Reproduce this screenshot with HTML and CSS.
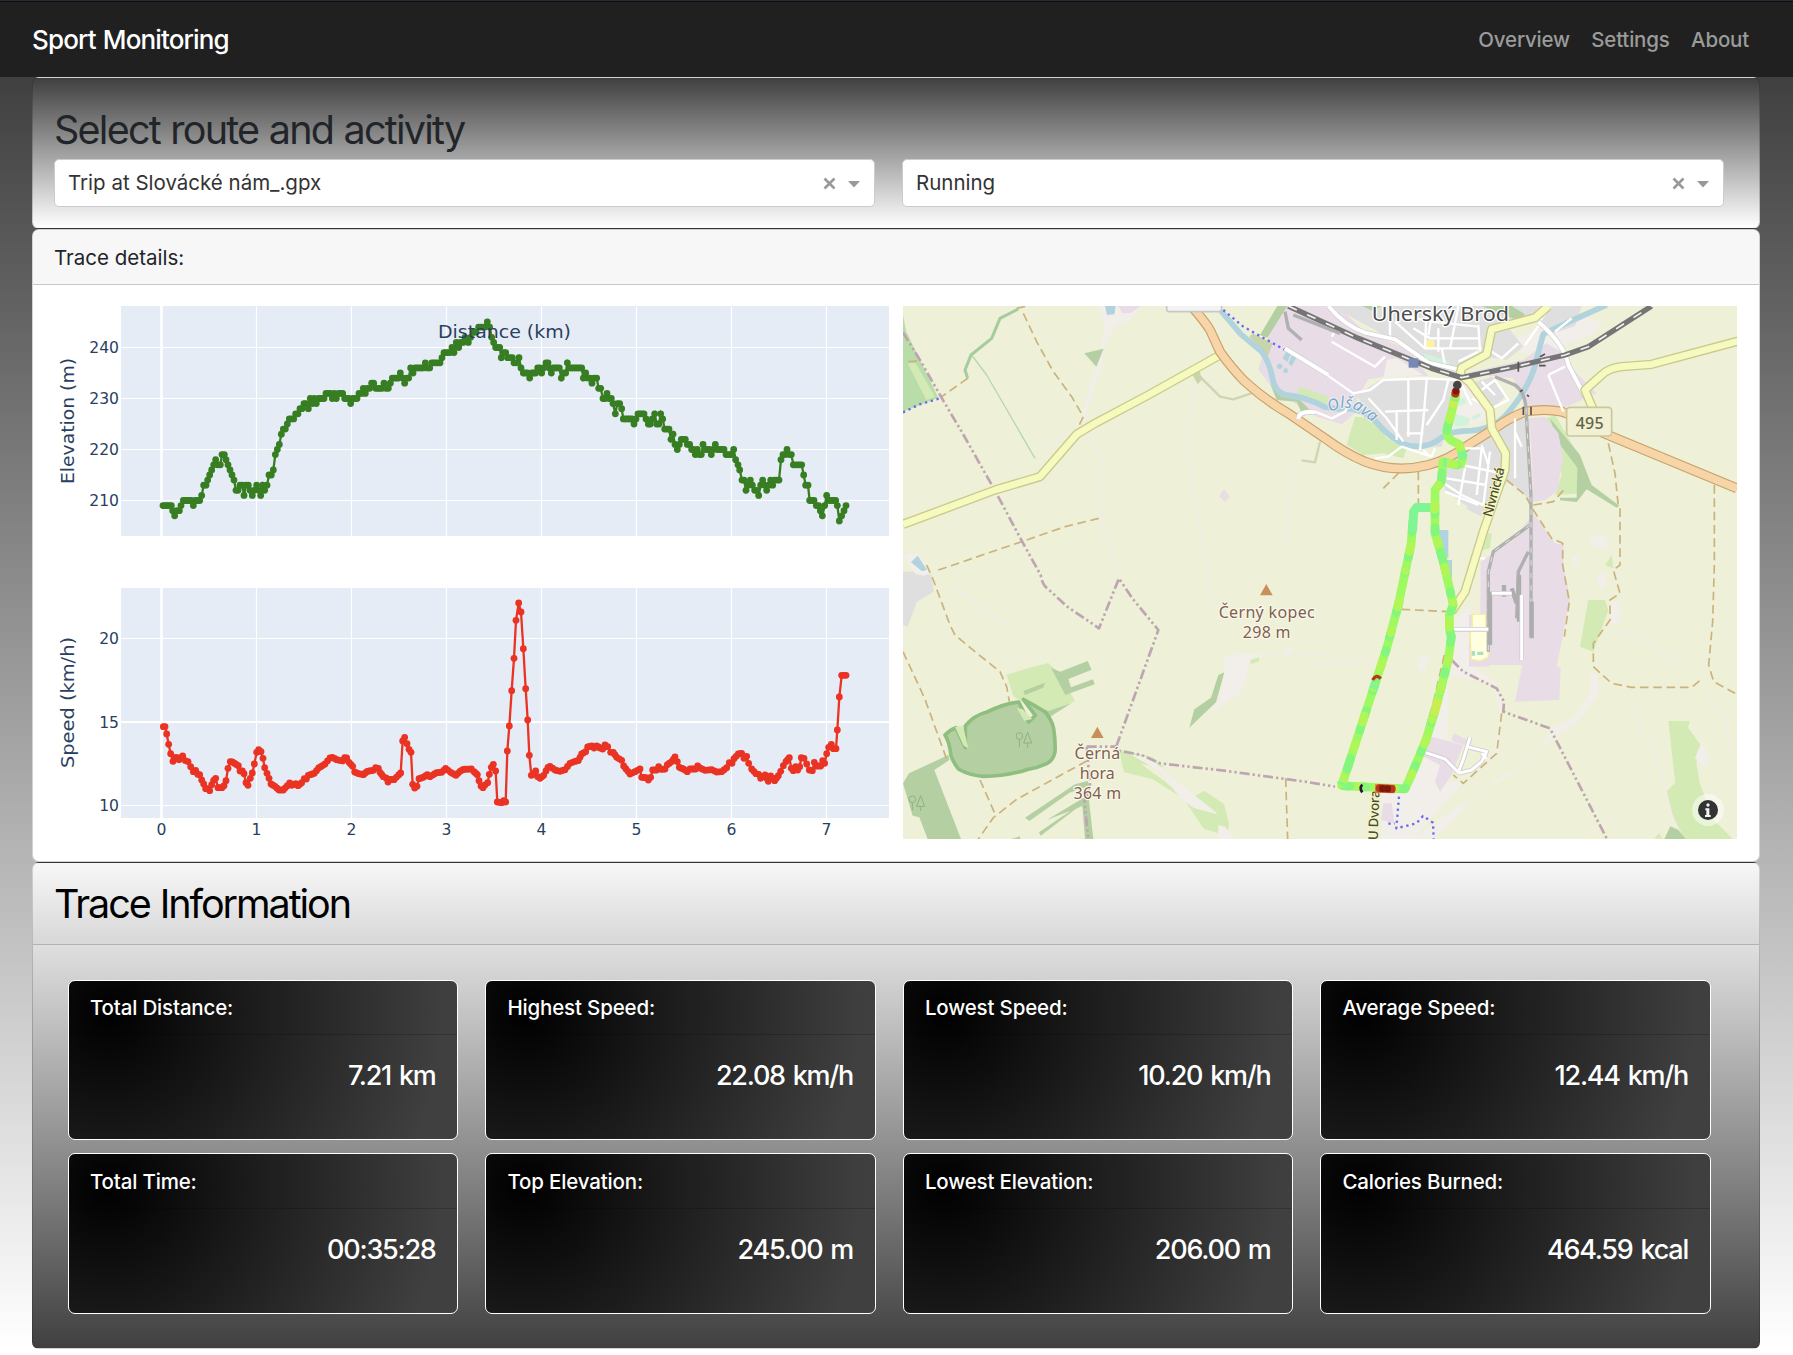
FILE: index.html
```html
<!DOCTYPE html>
<html lang="en">
<head>
<meta charset="utf-8">
<title>Sport Monitoring</title>
<link rel="stylesheet" href="styles.css">
</head>
<body>
<nav class="navbar">
  <a class="brand">Sport Monitoring</a>
  <div class="links"><a>Overview</a><a>Settings</a><a>About</a></div>
</nav>
<main class="page">
  <section class="card picker">
    <h2>Select route and activity</h2>
    <div class="pair">
      <div class="select"><span>Trip at Slovácké nám_.gpx</span><svg class="ctl" viewBox="0 0 40 20"><path d="M3.5 5.500l10 10M13.500 5.500L3.500 15.500"/><path class="fill" d="M27 8h12l-6 6.500z"/></svg></div>
      <div class="select"><span>Running</span><svg class="ctl" viewBox="0 0 40 20"><path d="M3.500 5.500l10 10M13.500 5.500L3.500 15.500"/><path class="fill" d="M27 8h12l-6 6.500z"/></svg></div>
    </div>
  </section>

  <section class="card details">
    <div class="card-head">Trace details:</div>
    <div class="card-body">
      <svg class="charts" viewBox="55 306 834 533">
        <rect class="plot" x="121" y="306" width="768" height="230"/>
        <rect class="plot" x="121" y="588" width="768" height="230"/>
        <g class="grid">
          <path d="M256.5 306v230M351.5 306v230M446.5 306v230M541.5 306v230M636.5 306v230M731.5 306v230M826.5 306v230M256.5 588v230M351.5 588v230M446.5 588v230M541.5 588v230M636.5 588v230M731.5 588v230M826.5 588v230"/>
          <path d="M121 347.5h768M121 398.5h768M121 449.5h768M121 500.5h768M121 638.5h768M121 805.5h768"/>
          <path class="zero" d="M161.5 306v230M161.5 588v230"/>
          <path class="mid" d="M121 722h768"/>
        </g>
        <g id="elevation" class="trace green"></g>
        <g id="speed" class="trace red"></g>
        <g class="ticks end">
          <text x="119" y="353">240</text><text x="119" y="404">230</text><text x="119" y="455">220</text><text x="119" y="506">210</text>
          <text x="119" y="644">20</text><text x="119" y="728">15</text><text x="119" y="811">10</text>
        </g>
        <g class="ticks mid">
          <text x="161.5" y="835">0</text><text x="256.5" y="835">1</text><text x="351.5" y="835">2</text><text x="446.5" y="835">3</text><text x="541.5" y="835">4</text><text x="636.5" y="835">5</text><text x="731.5" y="835">6</text><text x="826.5" y="835">7</text>
        </g>
        <g class="titles">
          <text x="438" y="338" textLength="133" lengthAdjust="spacingAndGlyphs">Distance (km)</text>
          <text transform="translate(74 484) rotate(-90)" textLength="126" lengthAdjust="spacingAndGlyphs">Elevation (m)</text>
          <text transform="translate(74 768) rotate(-90)" textLength="131" lengthAdjust="spacingAndGlyphs">Speed (km/h)</text>
        </g>
      </svg>

      <svg class="map" viewBox="24 33 2502 1599">
        <rect class="farm" x="24" y="33" width="2502" height="1599"/>
        <!-- north-west countryside -->
        <path class="wood2" d="M24 60l10 50 96 198-106 42z"/>
        <path class="grass" d="M38 205h24l58 100-26 10z"/>
        <path class="bare" d="M608 33h130l-30 40-45 20-30 50-15 80-20 50-30 100-15 40 10-50 20-90 30-80 15-100z"/>
        <path class="ind" d="M670 33h68l-30 20-25 2z"/><path class="water" d="M630 33h32l-4 25-22 2z"/>
        <path class="wood" d="M568 175l58-14-22 54z"/>
        <path class="bareline" d="M575 420l45 65-5 140 10 90 45 110M985 90l-50 60-40 150-22 150 30 170 35 220M1195 520l-25 220M445 465l80-60M940 850l15 60 20 30M175 875l80 60 95 60"/>
        <path class="ind" d="M972 603l15-20 18 22-15 15z"/>
        <path class="hedge" d="M370 42l-55 28-25 60-62 50-18 45 8 25"/><path class="thinhedge" d="M230 180l45 60 145 250"/>
        <path class="oliveh" d="M905 235l40 40 30 30 40 8 60-20M1275 440l-15 62-40-6"/><path class="oliveb" d="M890 235l25-5 5 25-12 12z"/>
        <path class="grey" d="M24 830l40 0 45 10 7 50-50 30-28 75-14-5z"/><path class="bare" d="M24 780l45-8 38 60-20 10-25-5z"/>
        <path class="water" d="M48 802l20-20 28 42-15 5z"/>
        <!-- western woodland -->
        <path class="grass" d="M335 1140l55-18 70-18 40 40 40 75-100 40-85-55z"/>
        <path class="wood" d="M468 1118l28 12 82-32 12 26-70 28 8 25 66-24 5 15-88 32zM385 1188l65-25-5 15-55 22zM410 1230l50 18 70-24-75 48z"/>
        <path class="wood edge" d="M150 1320q15-16 33-22l28 60 0-65q25-32 65-42 50-25 95-30l30 60 20-20-36-48q30 16 66 38 20 25 25 50 6 40 4 70-5 25-25 35-30 14-60 18-60 20-130 20-40-2-75-22-15-20-22-40-4-40-18-62z"/>
        <path class="grass" d="M180 1296l24-4 16 68-14-8zM366 1240l16 2 30 30-24 5z"/>
        <path class="wood" d="M24 1465l18-30 118-55 3 15-45 30 80 207h-100l-25-65-20-5z"/>
        <path class="wood" d="M390 1568l150-100 38-10 5 15-60 20-120 85zM455 1575l125-75 15 132h-25l-8-100-20 10-105 80-5-10 95-65z"/>
        <path class="grass" d="M672 1365l100 20 35 32-70-10 70 50 70 60 50-30 60 40 15 60-5 35-70-20-60-90-95-60-85-20z"/>
        <path class="bare" d="M705 1378l60 10 60 55 140 110 0 5-70-20-40-30-60-80zM970 1590l20 5 30 37h-50z"/>
        <path class="wood" d="M970 1140l18-8-25 90-30 28-50 48 15-55 50-35zM350 1632l25-8v8z"/>
        <path class="bare" d="M985 1085l60-10 70 5-50 20-20 80-15 20-100 60 40-40 20-90zM1170 1060l20-5 5 22-25 5z"/><path class="bareline" d="M1110 1085l60-12 120 5"/>
        <path class="grass" d="M1065 1095l28-8 0 12-25 8z"/>
        <g class="tree"><circle cx="373" cy="1323" r="10"/><path d="M373 1333v24M398 1312l-12 32h24zM398 1344v14"/><circle cx="52" cy="1513" r="10"/><path d="M52 1523v24M77 1502l-12 32h24zM77 1534v14"/></g>

        <!-- town -->
        <g transform="translate(1260 0)">
          <path class="ind" d="M-110 33h180l80 80 130 50 60 80H220l-60 10-35 60 10 30-55 45-80-25-80-50-60-50-30-40z"/>
          <path class="grass" d="M-45 275l85 30 5 45-45-25-60-15z"/>
          <path class="grass" d="M-20 310l0-25 60 50 0 10zM120 365l60 5 35 60 60 30-10 30-60-15-60 5-50-30z"/>
          <path class="wood" d="M-113 33h30l-60 95-22-8zM-135 265l35 40 55 10 30 30-20 20-20-45-60-5z"/><path class="oliveb" d="M-197 125l10-10 60 30-15 40z"/>
          <path class="bare" d="M215 195l30-5 80 50-120 10z"/>
          <path class="grey" d="M50 33h640l-30 40-130 35-10 70-75 45-100-15-105-70z"/>
          <path class="bare" d="M600 130l80-30 60-25 80-10 40 20-20 30-120 50-100 10z"/>
          <path class="grey" d="M680 80l30-47h90l-20 60-60 20zM525 115l60-10 40 50-50 40-60-10z"/>
          <path class="wood" d="M500 33h90l40 25-20 20-45-20zM140 33h60l-25 15z"/>
          <path class="mint" d="M325 175l80 25-10 20-55-15z"/><path class="yel" d="M330 135h28v28h-28zM470 480l15-8 5 25-20 5z"/>
          <path class="ind" d="M455 235l170-40 70-50 50 30 40 60 60 60-100 45-110 0-40-90z"/>
          <path class="grey" d="M195 255h225l-10 90-30 110-70 0-65-20-85-75-35-60z"/>
          <path class="bare" d="M420 260h60l50 90-30 30-90 20z"/><path class="grey" d="M470 265l60-20 45 55-40 40zM370 500l110-70 60-30 60-30 30 10 10 230-60-55-60 95-50-5-80-60z"/>
          <path class="mint" d="M415 355l50 15-5 20-40 5zM425 315l25-8 5 18-22 8zM470 365l25-12 2 12-20 10z"/>
          <path class="grass" d="M695 370l25-10 70 120 10 115-80 5 20-60-40-110z"/>
          <path class="wood" d="M705 370l90 110 15 40 20 50 83 62-8 6-90-55-30 38-50-5 0-8h50l2-90-60-80z"/>
          <path class="ind" d="M645 370l45-5 40 50 15 80-10 40-5 50-40 30-35 5z"/>
          <path class="grey" d="M600 370h45v250l-45-60zM450 640l50-15 0 40z"/>
          <path class="ind" d="M655 655l65 90 25 5v60l20 100-40 205h12l-4 100-133 5 22-110H495l2-310 100-65z"/>
          <path class="grass" d="M508 715l22 0-5 45-25 5zM870 810l20-30 5 40z"/><path class="bare" d="M825 720l50 0 5 40-50-5zM770 785l20-5 5 35-20-5z"/>
          <path class="water" d="M370 705h30v85l-25-20zM395 795h16v55h-16z"/>
          <path class="water" d="M-97 190l12-22 12 8-10 25zM-80 205l12-25 12 8-14 26z"/><circle class="water" cx="-106" cy="214" r="8"/><circle class="water" cx="-88" cy="227" r="7"/>
        </g>
        <!-- south-east -->
        <g transform="translate(1260 810)">
          <path class="bare" d="M415 170l50-50 0 180 75 50 20 60-10 150-100 90-60 60-80 100-20 20H200v-160l60 0 60-70z"/>
          <path class="farm" d="M400 330l130 25 25 90-15 110-70 90-75 5z"/>
          <path class="ind" d="M462 150h60v155h-60zM350 515l95 25-35 90-35 50-15-30 15-50-60-30zM415 505l55 25-5 15-55-18zM205 715h25l8 60-40-10z"/>
          <path class="yel2" d="M472 148h40v36h8l0 92-25 12-26-5-4-82h7z"/>
          <path class="bare" d="M710 490l65-30 50-80 0-60 25 10 0 60-70 90-60 30-130 120-60 30-70 60-80 80-20 20h-60l120-90 50-20 70-65 60-30 70-60z"/>
          <path class="grass" d="M820 105l50 0 10 30-45 125-40-15zM1060 468h64l-5 20 40 55-15 50 10 60 40 110 60 60h-145l-45-90-8-55 25-25z"/>
          <path class="wood" d="M1048 822l18-38 24 10 22 28z"/><path class="grass" d="M1018 820l15-15 8 17z"/>
          <path class="bare" d="M885 110l30 0 0 60-25 10zM842 40l20-20 15 20-15 40zM1160 530l25 50-15 30-30-30zM308 290l15-25 18 15-12 40-20-5z"/>
          <path class="bareline" d="M880 190l140 50 90 60M950 430l80 160 50 200M1180 390l50 70 20 90M0 290h180M900 750l-100 70"/>
          <path class="mintd" d="M470 258h10v14h-10zM487 260h18v10h-18z"/>
        </g>

        <!-- waterways -->
        <path class="river" d="M978 48l60 70 60 50q25 30 35 85 10 45 50 48 50 5 107 35l40 6q60-10 110 35 50 60 100 75 60 10 100-25 30-20 90-20 70-5 110-55 60-70 80-140 15-60 25-95l85-40 105-47"/>

        <!-- tracks and paths -->
        <g class="track">
          <path d="M365 40l35-8M385 55l40 85 50 90 55 75 35 60-17 35M218 250l-78 55M40 200l30-2M130 825l250-85 130-45 110-27"/>
          <path d="M95 810l20 45 50 135 15 30 60 50 75 60 20 45 8 45M24 1070l65 140 65 180M255 1455l48 108M575 1398l-210 115-70 55-45 64M1172 1450l6 182"/>
          <path d="M2140 445l20 90 10 100M2175 640v170l-20 15 20 70-30 20 0 60-50 70v70l55 50 60 12h180l30-25M2458 570v240l-5 170-12 130 15 50 70 38M1570 530v100M1465 580l50-50M1835 555l55 45 25 45 55 85 33 15v65l20 110-15 105M1915 630l60-10 35-40M1520 943l140 7M1820 1255l-15 120-100 90-30-25"/>
          <path d="M1648 1080l-30 130-36 130-62 140"/>
        </g>
        <path class="bluepath" d="M24 352l50-24 60-18M985 45l60 50 125 70M1512 1505l-8 95 60-15 20-22 30 20 2 50M1480 1586h20"/>
        <g class="boundary">
          <path d="M24 112l55 90 60 105 65 110 96 170 80 150 57 103q5 30 20 40l60 55 95 65 60-150 40 60 78 95-130 360 80 15 55 25 200 23 235 32 90 15M575 1355h95M575 1355l10 115-17 50 12 112"/>
          <path d="M1670 1095l35 35 100 50 22 40-2 30 140 50 170 330"/>
        </g>

        <!-- major roads -->
        <g class="road">
          <path class="ycase" d="M24 688l276-103 135-40 110-127 55-33 160-85 215-120"/><path class="yfill" d="M24 688l276-103 135-40 110-127 55-33 160-85 215-120"/>
          <path class="ocase" d="M895 40q35 40 50 65l30 65q35 50 75 90 60 55 130 95l110 75q60 45 120 70 90 35 190 10 60-15 120-60l80-50q40-30 90-50 60-10 110 0l30 10M2120 412l406 168"/>
          <path class="ofill" d="M895 40q35 40 50 65l30 65q35 50 75 90 60 55 130 95l110 75q60 45 120 70 90 35 190 10 60-15 120-60l80-50q40-30 90-50 60-10 110 0l30 10M2120 412l406 168"/>
        </g>
        <g transform="translate(1260 0)">
          <g class="street">
            <path d="M50 125l20-30M50 140l130 75 30-30M0 215l115 80 50-10 40-30 130-5 90 5M0 350l50 20 40-20 25-50M160 310l55 60 50 70M280 255v170M335 255l-10 120-10 90M210 350l130-5M245 345v90M275 415h50M400 255l-15 60-50 75M180 490l40-5 40-30 90 30 10-25M340 480l-15-15"/>
            <path d="M240 80l90 80h170M225 40v90M335 40l-5 120M295 100l50 30 150 0M370 100v70M430 33l-25 130M490 90l5 80M250 60l100 20 140 15M380 160l10 50M430 200l60-30M350 60l-10 60"/>
            <path d="M470 310l60 30 50-25-40-60-40 30M440 270l30 60M500 260l40 40M530 170l30 20 50-45M630 150l50-70M700 240l50-25M700 240l45 110M700 33l-30 50M720 110l50-40"/>
            <path d="M440 510l120 25M440 460l60 0-15 140M380 560l60 40 75 35M390 590l100 40M525 470l-20 160M600 370v180M600 410l20 45M395 550l120 20M450 520l-20 110M490 790h20M500 450l20 60"/>
          </g>
          <g class="avenue"><path d="M40 33q50 60 110 80l90 20 100 70 90 20M670 80q80 70 90 130l50 95M-90 160l130 80M-50 372q0-25 50-20"/></g>
          <g class="avenue-in"><path d="M40 33q50 60 110 80l90 20 100 70 90 20M670 80q80 70 90 130l50 95M-90 160l130 80M-50 372q0-25 50-20"/></g>
          <g class="road"><path class="ycase" d="M700 33l-40 35-130 35-15 75-75 40-5 20 30 25 60 82 5 55 42 75-2 50-65 185-55 180-40 60"/><path class="ycase" d="M1270 138l-260 70-90 7q-40 5-60 25l-50 45 25 60"/>
          <path class="yfill" d="M700 33l-40 35-130 35-15 75-75 40-5 20 30 25 60 82 5 55 42 75-2 50-65 185-55 180-40 60"/><path class="yfill" d="M1270 138l-260 70-90 7q-40 5-60 25l-50 45 25 60"/></g>
          <path class="rail" d="M-80 33L130 130l220 90 90 28 160-33 150-35 70-25L1010 33"/><path class="raildash" d="M-80 33L130 130l220 90 90 28 160-33 150-35 70-25L1010 33"/>
          <path class="rail2" d="M540 245l60 25q30 20 33 70l15 260v425M645 690l-110 80-15 60v240M640 770l-30 60-5 140M-90 50l10 50 40 35M-65 60l140 55"/>
          <path class="rail2dash" d="M633 340l15 260v425M645 690l-110 80-15 60v240"/>
          <path class="bridge" d="M625 335v25M648 335v25M675 185l15-8M672 212l20 0M610 200v30M615 290l8-5M636 300l6 5"/>
          <path class="siding" d="M525 890v160M612 840v140M650 920v110M567 870v35M590 880l15 45"/>
          <path class="street g case" d="M415 1003h105M530 895h60M620 900v195M330 1372l60 20 40 40 15-40 20-65M455 1355l60 15-15 30-30 25-40 10M500 1375l15 15"/>
          <path class="street g" d="M415 1003h105M530 895h60M620 900v195M330 1372l60 20 40 40 15-40 20-65M455 1355l60 15-15 30-30 25-40 10M500 1375l15 15"/>
          <rect class="station" x="281" y="190" width="29" height="28"/>
        </g>
        <rect class="shield" x="815" y="10" width="165" height="40" rx="8"/>
        <rect class="shield cream" x="2015" y="337" width="135" height="86" rx="10"/>

        <!-- place names -->
        <text class="town" x="1430" y="77" textLength="412" lengthAdjust="spacingAndGlyphs">Uherský Brod</text>
        <text class="ref" x="2042" y="402" textLength="84">495</text>
        <path id="riverName" d="M1305 352q45-25 80-5 30 20 75 55" fill="none"/>
        <text class="rivername"><textPath href="#riverName">Olšava</textPath></text>
        <text class="streetname" transform="translate(1790 668) rotate(-75)" textLength="152">Nivnická</text>
        <text class="streetname" transform="translate(1448 1636) rotate(-88)" textLength="150">U Dvora</text>
        <g class="peak"><path d="M1114 867l19 34h-38zM607 1295l19 34h-38z"/>
          <text x="1115" y="968" textLength="288">Černý kopec</text><text x="1115" y="1028" textLength="143">298 m</text>
          <text x="607" y="1392" textLength="137">Černá</text><text x="607" y="1451" textLength="105">hora</text><text x="607" y="1512" textLength="143">364 m</text></g>

        <!-- recorded route -->
        <g class="route">
          <path id="track" class="base" d="M1682 300L1674 335L1658 395Q1650 425 1670 437L1692 448L1704 483L1698 508L1684 510L1644 500L1639 560L1620 585V715L1645 800L1675 930L1663 960V1000L1669 1025L1660 1095L1630 1210L1595 1330L1545 1450L1530 1482L1340 1472L1380 1350L1445 1152L1475 1060L1510 930L1535 810L1548 750L1556 650L1565 637L1605 638"/>
          <use href="#track" class="teal"/><use href="#track" class="lime"/>
          <path class="mint1" d="M1605 638L1565 637L1556 650L1553 710M1699 470l4 14M1655 502l-10-1M1669 1024l1 3M1341 1462l-3 8M1441 1168l-6 14"/>
          <path class="gold" d="M1630 1212l-14 50M1677 318l-5 20"/>
          <path class="amber" d="M1440 1480l60 2"/><path class="crimson" d="M1454 1480l36 2M1682 290l-1 6"/><path class="dark" d="M1462 1480v1M1478 1481v1M1683 288v1"/>
          <path class="crimson cap" d="M1433 1155q12-20 24-4"/>
          <path class="night" d="M1402 1469q-10 10 0 23"/>
          <circle cx="1687" cy="270" r="13"/>
        </g>
        <circle class="info-bg" cx="2439" cy="1545" r="48"/><circle class="info" cx="2439" cy="1545" r="30"/>
        <circle class="info-i" cx="2439" cy="1530" r="5"/><path class="info-i" d="M2431 1540h12v20h4v6h-17v-6h4v-14h-3z"/>
      </svg>
    </div>
  </section>

  <section class="card summary">
    <div class="summary-head"><h2>Trace Information</h2></div>
    <div class="stats">
      <div class="stat"><h3>Total Distance:</h3><p>7.21 km</p></div>
      <div class="stat"><h3>Highest Speed:</h3><p>22.08 km/h</p></div>
      <div class="stat"><h3>Lowest Speed:</h3><p>10.20 km/h</p></div>
      <div class="stat"><h3>Average Speed:</h3><p>12.44 km/h</p></div>
      <div class="stat"><h3>Total Time:</h3><p>00:35:28</p></div>
      <div class="stat"><h3>Top Elevation:</h3><p>245.00 m</p></div>
      <div class="stat"><h3>Lowest Elevation:</h3><p>206.00 m</p></div>
      <div class="stat"><h3>Calories Burned:</h3><p>464.59 kcal</p></div>
    </div>
  </section>
</main>
<script src="charts.js"></script>
</body>
</html>
```

FILE: styles.css
```css
* { box-sizing: border-box; }
html { background: #fff; }
body { margin: 0; color: #212529; font: 20.5px/1.5 Inter, "Liberation Sans", sans-serif; letter-spacing: 0; }
h2, h3, p { margin: 0; font-weight: 400; }

.navbar { display: flex; justify-content: space-between; align-items: center; height: 77px; padding: 1px 44px 0 32px; background: #202020; border-top: 1px solid #2b2b38; box-shadow: inset 0 1px #0c0c0c; }
.brand { color: #fff; font-size: 26px; font-weight: 500; letter-spacing: -0.85px; word-spacing: 1px; }
.links { display: flex; gap: 21.5px; padding-top: 1px; color: #9b9b9b; font-weight: 500; letter-spacing: -0.2px; }

.page { padding: 0 33px 0 32px; height: 1272px; background: linear-gradient(#404040, #fff); }
.card { border: 1px solid rgba(0, 0, 0, .175); border-radius: 7px; background-color: #fff; overflow: hidden; }
h2 { font-size: 39.5px; line-height: 48px; letter-spacing: -1.75px; word-spacing: 1px; }

.picker { height: 152px; padding: 28px 35px 0 21px; background-image: linear-gradient(#404040, #fff); }
.picker h2 { height: 53px; }
.pair { display: grid; grid-template-columns: 821px 1fr; gap: 27px; }
.select { display: flex; justify-content: space-between; align-items: center; height: 48px; padding: 0 13px; background: #fff; border: 1px solid #ccc; border-radius: 5px; color: #333; }
.ctl { width: 40px; height: 20px; fill: none; stroke: #999; stroke-width: 2.6; }
.ctl .fill { fill: #999; stroke: none; }

.details { height: 633px; }
.card-head { height: 55px; padding: 13px 21px; background: #f7f7f7; border-bottom: 1px solid #c8c8c8; }
.card-body { display: flex; gap: 14px; padding: 21px 22px; }
.charts, .map { width: 834px; height: 533px; display: block; flex: none; overflow: hidden; }
.plot { fill: #e5ecf6; }
.grid { stroke: #fff; stroke-width: 1.2; }
.grid .zero { stroke-width: 2.6; }
.grid .mid { stroke-width: 2; }
.trace polyline { fill: none; stroke-width: 2.3; }
.green { fill: #377e22; stroke: #377e22; }
.red { fill: #ea3323; stroke: #ea3323; }
.trace circle { stroke: none; }
.ticks, .titles { fill: #2a3f5f; font-family: "DejaVu Sans", sans-serif; letter-spacing: 0; }
.ticks { font-size: 15.6px; }
.titles { font-size: 18.5px; }
.end { text-anchor: end; }
.ticks.mid { text-anchor: middle; }

.farm { fill: #eef0d7; }
.wood { fill: #b4d0a3; }
.wood2 { fill: #b9dda8; }
.edge { stroke: #8fbf80; stroke-width: 11; stroke-linejoin: round; }
.grass { fill: #d3eab5; }
.bare { fill: #f2eee9; }
.ind { fill: #e8dce6; }
.grey { fill: #dfdfdf; }
.water { fill: #b0d3dd; }
.mint { fill: #d0f3dc; }
.mintd { fill: #a9dfc4; }
.yel { fill: #fbf3a0; }
.yel2 { fill: #ffffe0; stroke: #f5efa0; stroke-width: 4; }
.oliveb { fill: #c8d4a9; }
.map path { stroke-linejoin: round; }
.bareline, .hedge, .thinhedge, .oliveh, .river, .track path, .bluepath, .boundary path, .road path, .street, .street path, .avenue path, .avenue-in path, .rail, .raildash, .rail2, .rail2dash, .bridge, .siding, .route path { fill: none; }
.bareline { stroke: #f1ede6; stroke-width: 6; }
.hedge { stroke: #a5cc9c; stroke-width: 9; }
.thinhedge { stroke: #b8d6ab; stroke-width: 4; }
.oliveh { stroke: #cdd6b3; stroke-width: 7; }
.tree { fill: none; stroke: #8fb283; stroke-width: 3; }
.river { stroke: #b0d3dd; stroke-width: 17; }
.track path { stroke: #cbb27c; stroke-width: 5; stroke-dasharray: 26 14; }
.bluepath { stroke: #6a6aee; stroke-width: 7; stroke-dasharray: 7 11; }
.boundary path { stroke: #bda5b1; stroke-width: 8; stroke-dasharray: 30 9 7 9 7 9; }
.ycase { stroke: #c9ca8c; stroke-width: 28; }
.yfill { stroke: #f7fabf; stroke-width: 20; }
.ocase { stroke: #c8a468; stroke-width: 30; }
.ofill { stroke: #f8d5a8; stroke-width: 23; }
.street path { stroke: #fff; stroke-width: 7; }
.street.g { stroke: #fff; stroke-width: 9; }
.street.g.case { stroke: #cfcbcf; stroke-width: 14; }
.avenue path { stroke: #d0d0d0; stroke-width: 16; }
.avenue-in path { stroke: #fff; stroke-width: 12; }
.rail { stroke: #757575; stroke-width: 16; }
.raildash { stroke: #f2f2f2; stroke-width: 5; stroke-dasharray: 28 34; }
.rail2 { stroke: #b0b0b0; stroke-width: 10; }
.rail2dash { stroke: #e4dfe4; stroke-width: 3; stroke-dasharray: 16 22; }
.bridge { stroke: #555; stroke-width: 5; }
.siding { stroke: #adadad; stroke-width: 13; }
.station { fill: #7688b3; }
.shield { fill: #f3f3f3; stroke: #c8c8c8; stroke-width: 5; }
.shield.cream { fill: #f1f0d3; stroke: #c8c79d; }
.map text { font-family: "Noto Sans", sans-serif; letter-spacing: 0; paint-order: stroke; stroke-linejoin: round; }
.town { font-size: 62px; fill: #4c4c4c; stroke: #fff; stroke-width: 8; }
.ref { font-size: 48px; fill: #63654a; stroke: none; font-weight: 500; }
.rivername { font-size: 48px; fill: #7ba6cb; font-style: italic; stroke: #eef0f0; stroke-width: 6; }
.streetname { font-size: 40px; fill: #4a4a35; stroke: #f7fabf; stroke-width: 5; font-weight: 500; }
.peak path { fill: #c98f5b; }
.peak text { font-size: 48px; fill: #80604d; stroke: #faf8ec; stroke-width: 7; text-anchor: middle; }
.route path { stroke-width: 26; }
.route .base { stroke-linecap: round; }
.route path.base { stroke: inherit; }
.route { stroke: #9ffa62; }
.route .teal { stroke: #84f67e; stroke-dasharray: 14 62 34 88 8 40; }
.route .lime { stroke: #b0f658; stroke-dasharray: 0 60 16 96 8 72 20 90; }
.route .mint1 { stroke: #7ff595; }
.route .gold { stroke: #c8ee52; }
.route .amber { stroke: #f0813a; }
.route .crimson { stroke: #b8361c; stroke-linecap: round; stroke-width: 24; }
.route .dark { stroke: #7e180d; stroke-width: 20; stroke-linecap: round; }
.route .cap { stroke-width: 10; stroke-linecap: butt; }
.route .night { stroke: #2a1639; stroke-width: 8; }
.route circle { fill: #454545; stroke: none; }
.info-bg { fill: rgba(255, 255, 255, .5); }
.info { fill: #333; }
.info-i { fill: #f5f5f0; }

.summary { height: 487px; background-image: linear-gradient(#fff, #404040); }
.summary-head { height: 82px; padding: 18px 21px; color: #000; background: rgba(0, 0, 0, .03); border-bottom: 1px solid rgba(0, 0, 0, .175); }
.summary-head h2 { line-height: 47px; letter-spacing: -2.05px; }
.stats { display: grid; grid-template-columns: repeat(4, 1fr); gap: 13.5px 27.4px; padding: 34.6px 48.5px 0 35px; }
.stat { height: 160px; color: #fff; border: 1px solid #fff; border-radius: 7px; background: radial-gradient(circle at 10% 20%, #000 0%, #404040 90.2%); overflow: hidden; }
.stat:nth-child(n+5) h3 { padding-top: 12px; height: 55px; }
.stat:nth-child(n+5) { height: 161px; }
.stat h3 { height: 54px; padding: 11px 21px 0; font-size: 20.5px; font-weight: 500; letter-spacing: -0.17px; line-height: 31px; background: rgba(33, 37, 41, .03); border-bottom: 1px solid rgba(0, 0, 0, .175); }
.stat p { padding: 21px 21.5px 0; font-size: 27px; font-weight: 500; letter-spacing: -1.25px; word-spacing: 2px; line-height: 40px; text-align: right; }
```

FILE: charts.js
```js
// Elevation samples: horizontal position (1/3 px from x = 30) and metres.
const elevation = [[399,209],[424,209],[428,208],[434,207],[440,208],[448,208],[453,209],[460,210],[484,210],[490,209],[496,210],[509,210],[515,211],[521,213],[528,213],[533,214],[539,215],[545,216],[551,217],[557,218],[563,217],[571,217],[576,219],[583,219],[588,218],[594,217],[600,216],[606,215],[612,214],[618,212],[624,212],[630,213],[637,213],[642,211],[648,213],[655,213],[660,212],[667,211],[673,212],[680,213],[686,212],[692,211],[698,213],[704,212],[711,213],[717,215],[724,215],[730,216],[736,219],[742,220],[748,221],[754,223],[760,224],[766,224],[772,225],[778,226],[791,226],[797,227],[804,227],[810,228],[816,228],[822,229],[828,229],[835,228],[841,230],[847,229],[853,230],[859,229],[866,230],[882,230],[888,231],[901,231],[907,230],[913,231],[919,230],[926,231],[938,231],[944,230],[956,230],[962,229],[968,230],[981,230],[987,231],[994,231],[1000,232],[1006,231],[1012,232],[1019,232],[1025,233],[1031,233],[1037,232],[1056,232],[1062,233],[1068,232],[1075,232],[1081,233],[1087,234],[1105,234],[1111,235],[1118,234],[1124,233],[1130,234],[1136,234],[1142,236],[1149,235],[1155,236],[1179,236],[1186,237],[1192,236],[1199,236],[1205,237],[1230,237],[1236,238],[1242,239],[1260,239],[1266,240],[1272,239],[1279,241],[1286,240],[1292,241],[1299,241],[1305,242],[1315,241],[1322,242],[1330,243],[1338,243],[1346,244],[1365,244],[1372,245],[1379,244],[1385,242],[1391,241],[1397,240],[1409,240],[1414,238],[1420,239],[1427,239],[1433,238],[1447,238],[1452,237],[1460,237],[1467,238],[1473,236],[1480,235],[1492,235],[1499,234],[1505,235],[1517,235],[1523,236],[1530,236],[1535,235],[1541,236],[1548,237],[1554,237],[1558,236],[1564,235],[1570,236],[1588,236],[1594,234],[1600,235],[1607,235],[1612,237],[1618,236],[1655,236],[1660,234],[1667,235],[1673,234],[1680,234],[1686,233],[1692,234],[1700,234],[1706,232],[1712,232],[1719,230],[1725,230],[1731,231],[1737,230],[1744,230],[1749,229],[1756,227],[1762,229],[1769,229],[1775,228],[1780,226],[1806,226],[1812,225],[1818,226],[1824,227],[1842,227],[1848,226],[1855,225],[1861,225],[1867,226],[1874,227],[1880,225],[1887,225],[1892,227],[1898,226],[1904,224],[1917,224],[1923,222],[1929,223],[1935,221],[1942,220],[1948,221],[1954,222],[1966,222],[1972,221],[1979,221],[1985,220],[1990,220],[1996,219],[2002,220],[2008,219],[2014,219],[2019,221],[2026,220],[2038,220],[2044,219],[2050,220],[2056,221],[2062,220],[2082,220],[2088,219],[2105,219],[2111,220],[2117,218],[2124,217],[2129,216],[2136,214],[2142,214],[2148,212],[2154,213],[2161,214],[2167,213],[2174,212],[2180,212],[2186,211],[2192,213],[2198,214],[2204,213],[2210,212],[2216,213],[2222,214],[2228,213],[2234,214],[2247,214],[2253,218],[2259,219],[2266,219],[2271,220],[2278,219],[2284,219],[2290,217],[2315,217],[2321,215],[2327,213],[2334,213],[2339,210],[2352,210],[2359,209],[2366,209],[2371,208],[2377,207],[2384,209],[2390,211],[2396,210],[2417,210],[2422,209],[2428,206],[2435,207],[2442,208],[2448,209]];
// Speed samples: both coordinates in 1/3 px from (30, 570).
const speed = [[400,470],[405,470],[410,492],[416,523],[422,551],[429,574],[436,562],[442,563],[447,569],[458,558],[466,572],[474,575],[482,590],[490,605],[497,601],[503,613],[509,614],[515,630],[521,642],[527,656],[533,656],[539,662],[545,644],[551,631],[557,625],[564,653],[576,653],[582,647],[588,632],[594,595],[601,575],[607,576],[625,587],[630,603],[637,603],[642,611],[648,638],[654,646],[661,625],[667,609],[673,582],[680,547],[686,539],[693,545],[699,565],[704,593],[711,610],[717,625],[723,642],[735,649],[747,660],[760,660],[772,647],[779,639],[785,646],[797,641],[804,647],[815,638],[823,626],[829,627],[835,616],[853,610],[866,594],[885,582],[900,564],[907,562],[920,569],[938,573],[944,563],[950,564],[957,577],[968,589],[974,606],[986,611],[1000,614],[1012,604],[1030,601],[1037,593],[1045,595],[1050,607],[1060,620],[1068,624],[1074,636],[1080,628],[1092,629],[1106,615],[1112,609],[1118,513],[1124,502],[1131,521],[1137,538],[1143,547],[1148,643],[1154,654],[1161,649],[1167,626],[1180,622],[1192,614],[1200,620],[1220,608],[1235,607],[1247,595],[1262,607],[1278,616],[1290,604],[1300,598],[1324,597],[1332,605],[1342,614],[1347,632],[1353,648],[1359,653],[1365,645],[1373,638],[1378,613],[1384,592],[1390,583],[1397,603],[1402,696],[1415,698],[1421,692],[1427,696],[1432,543],[1438,468],[1445,362],[1452,265],[1458,151],[1466,99],[1473,126],[1480,236],[1487,356],[1493,450],[1498,556],[1504,616],[1511,612],[1517,603],[1523,620],[1530,625],[1541,616],[1548,603],[1554,592],[1560,589],[1575,600],[1590,604],[1605,599],[1620,580],[1635,574],[1645,572],[1655,552],[1667,545],[1673,531],[1685,528],[1692,534],[1700,528],[1710,534],[1718,537],[1725,525],[1733,530],[1742,547],[1750,547],[1760,562],[1775,571],[1781,588],[1800,612],[1815,605],[1830,597],[1835,622],[1848,623],[1855,630],[1862,622],[1868,600],[1880,600],[1886,590],[1894,598],[1905,597],[1912,584],[1925,575],[1935,561],[1942,575],[1948,592],[1960,597],[1972,605],[1980,597],[1997,597],[2003,588],[2010,594],[2025,601],[2045,599],[2060,606],[2075,605],[2090,593],[2098,578],[2106,580],[2112,566],[2125,552],[2135,550],[2142,565],[2150,559],[2156,580],[2165,597],[2178,611],[2186,613],[2192,625],[2205,615],[2215,634],[2222,618],[2234,632],[2245,617],[2252,604],[2260,587],[2268,575],[2278,563],[2284,595],[2290,602],[2297,590],[2303,600],[2309,590],[2314,563],[2322,565],[2330,582],[2338,600],[2347,602],[2353,577],[2360,588],[2372,588],[2378,572],[2384,580],[2390,551],[2396,532],[2404,523],[2410,536],[2418,536],[2422,480],[2428,381],[2435,316],[2448,316]];

function draw(id, keys) {
  const pts = [];
  keys.forEach((p, i) => {
    pts.push(p);
    const q = keys[i + 1];
    if (!q) return;
    const n = Math.round((q[0] - p[0]) / 2.1);
    for (let k = 1; k < n; k++) pts.push([p[0] + (q[0] - p[0]) * k / n, p[1] + (q[1] - p[1]) * k / n]);
  });
  const f = p => p.map(v => v.toFixed(2));
  document.getElementById(id).innerHTML =
    '<polyline points="' + pts.map(p => f(p).join(',')).join(' ') + '"/>' +
    pts.map(p => { const [x, y] = f(p); return `<circle cx="${x}" cy="${y}" r="3.4"/>`; }).join('');
}
draw('elevation', elevation.map(([x, m]) => [30 + x / 3, 500.5 - (m - 210) * 5.1]));
draw('speed', speed.map(([x, y]) => [30 + x / 3, 570 + y / 3]));
```
